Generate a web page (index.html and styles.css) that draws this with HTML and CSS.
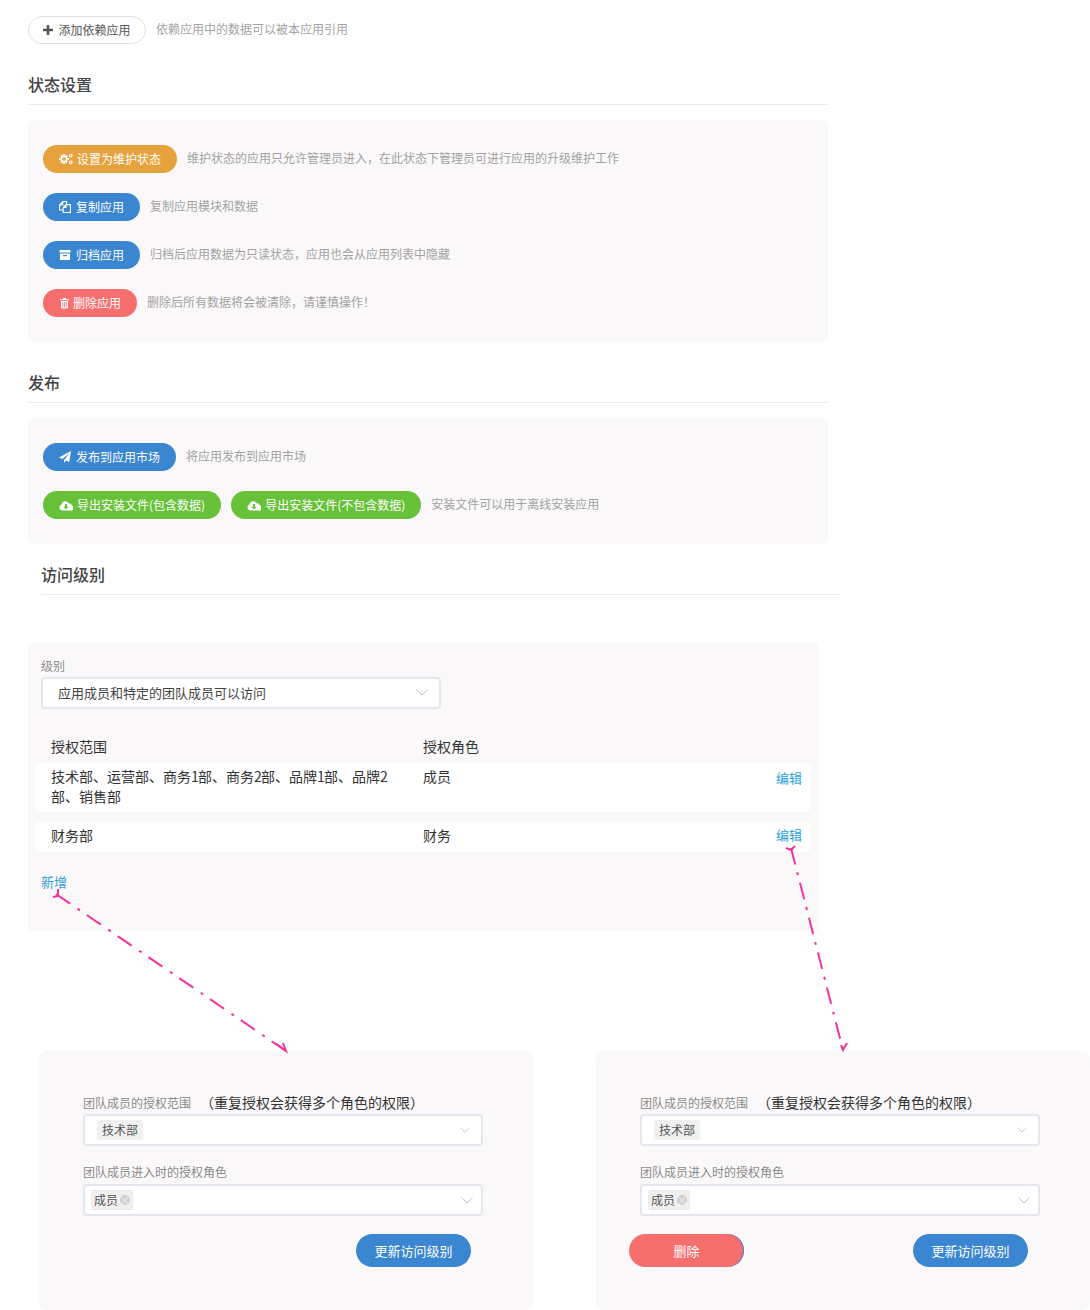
FILE: index.html
```html
<!DOCTYPE html>
<html lang="zh-CN">
<head>
    <meta charset="UTF-8">
    <meta name="viewport" content="width=device-width, initial-scale=1.0">
    <title>应用设置</title>
    <link rel="stylesheet" href="styles.css">
</head>
<body>
    <div class="page">
        <div class="dep-row">
            <button class="dep-btn">
                <svg class="icon-plus" viewBox="0 0 10 10"><path d="M3.700 0h2.600v3.700H10v2.600H6.300V10H3.700V6.300H0V3.700h3.700z"/></svg>
                添加依赖应用
            </button>
            <span class="hint">依赖应用中的数据可以被本应用引用</span>
        </div>

        <h2 class="section-title">状态设置</h2>
        <div class="panel panel-status">
            <div class="action-row">
                <button class="btn btn-orange">
                    <svg class="icon icon-wide" viewBox="0 0 14 12"><circle cx="5" cy="6" r="2.800" fill="none" stroke="#fff" stroke-width="1.900"/><path d="M4.100 1h1.800v1.500H4.100zM4.100 9.500h1.800V11H4.100zM0 5.100h1.500v1.800H0zM8.500 5.100H10v1.800H8.500zM1.300 3l1.200-1.200 1 1-1.200 1.200zM7.500 1.800 8.700 3l-1 1.200-1.200-1.200zM1.300 9l1.200 1.200 1-1-1.200-1.200zM8.700 9l-1.200 1.200-1-1 1.200-1.200z"/><circle cx="11.800" cy="2.600" r="1.300" fill="none" stroke="#fff" stroke-width="1.100"/><circle cx="11.800" cy="9.400" r="1.300" fill="none" stroke="#fff" stroke-width="1.100"/></svg>
                    设置为维护状态
                </button>
                <span class="hint">维护状态的应用只允许管理员进入，在此状态下管理员可进行应用的升级维护工作</span>
            </div>
            <div class="action-row">
                <button class="btn btn-blue">
                    <svg class="icon" viewBox="0 0 12 12"><path d="M7 3.600h4.400v7.900H4.200V6.400zM7 3.600v2.800H4.200M4.200 9H.6V4L3.700.6H7.600v3M3.700.6V4H.6" fill="none" stroke="#fff" stroke-width="1.100"/></svg>
                    复制应用
                </button>
                <span class="hint">复制应用模块和数据</span>
            </div>
            <div class="action-row">
                <button class="btn btn-blue">
                    <svg class="icon" viewBox="0 0 12 12"><path d="M.5 1h11v2.500H.5zM1 4.500h10V11H1zM4 6v1.200h4V6z" fill-rule="evenodd"/></svg>
                    归档应用
                </button>
                <span class="hint">归档后应用数据为只读状态，应用也会从应用列表中隐藏</span>
            </div>
            <div class="action-row">
                <button class="btn btn-red">
                    <svg class="icon icon-narrow" viewBox="0 0 11 12"><path d="M4.200 1h2.600l.5 1.200h2.700v1.100H1V2.200h2.700zM2 4h7v6.500a1 1 0 0 1-1 1H3a1 1 0 0 1-1-1zM3.500 5.200v5h.8v-5zM5.100 5.200v5h.8v-5zM6.700 5.200v5h.8v-5z" fill-rule="evenodd"/></svg>
                    删除应用
                </button>
                <span class="hint">删除后所有数据将会被清除，请谨慎操作！</span>
            </div>
        </div>

        <h2 class="section-title">发布</h2>
        <div class="panel panel-publish">
            <div class="action-row">
                <button class="btn btn-blue">
                    <svg class="icon" viewBox="0 0 12 12"><path d="M12 0 10.200 11 6.800 9.600 5 11.800V9.200L10.500 2 3.400 8 0 6.600z"/></svg>
                    发布到应用市场
                </button>
                <span class="hint">将应用发布到应用市场</span>
            </div>
            <div class="action-row">
                <button class="btn btn-green">
                    <svg class="icon icon-cloud" viewBox="0 0 14 11"><path d="M3.300 10.500A3 3 0 0 1 2.700 4.600 3.500 3.500 0 0 1 9.400 3.300 2.700 2.700 0 0 1 12.800 5.600 2.500 2.500 0 0 1 11.500 10.500zM6 4v2.700H4.200L7 9.400 9.800 6.700H8V4z" fill-rule="evenodd"/></svg>
                    导出安装文件(包含数据)
                </button>
                <button class="btn btn-green">
                    <svg class="icon icon-cloud" viewBox="0 0 14 11"><path d="M3.300 10.500A3 3 0 0 1 2.700 4.600 3.500 3.500 0 0 1 9.400 3.300 2.700 2.700 0 0 1 12.800 5.600 2.500 2.500 0 0 1 11.500 10.500zM6 4v2.700H4.200L7 9.400 9.800 6.700H8V4z" fill-rule="evenodd"/></svg>
                    导出安装文件(不包含数据)
                </button>
                <span class="hint">安装文件可以用于离线安装应用</span>
            </div>
        </div>

        <h2 class="section-title section-title-access">访问级别</h2>
        <div class="access-panel">
            <label class="field-label">级别</label>
            <div class="select select-level">
                <span>应用成员和特定的团队成员可以访问</span>
                <svg class="chevron" viewBox="0 0 12 7"><path d="M.5.5 6 6 11.500.5"/></svg>
            </div>

            <div class="grant-head">
                <span>授权范围</span>
                <span>授权角色</span>
            </div>
            <div class="grant-row">
                <span class="grant-scope">技术部、运营部、商务<span class="num">1</span>部、商务<span class="num">2</span>部、品牌<span class="num">1</span>部、品牌<span class="num">2</span>部、销售部</span>
                <span>成员</span>
                <a class="link link-low">编辑</a>
            </div>
            <div class="grant-row grant-row-single">
                <span class="grant-scope">财务部</span>
                <span>财务</span>
                <a class="link">编辑</a>
            </div>
            <a class="link link-add">新增</a>
        </div>

        <div class="form-cards">
            <div class="form-card">
                <div class="form-label-row">
                    <label class="field-label">团队成员的授权范围</label>
                    <span class="form-note">（重复授权会获得多个角色的权限）</span>
                </div>
                <div class="select">
                    <span class="tag">技术部</span>
                    <svg class="chevron chevron-small" viewBox="0 0 12 7"><path d="M.5.5 6 6 11.500.5"/></svg>
                </div>
                <label class="field-label field-label-role">团队成员进入时的授权角色</label>
                <div class="select select-role">
                    <span class="tag tag-close">成员<i class="tag-x"></i></span>
                    <svg class="chevron" viewBox="0 0 12 7"><path d="M.5.5 6 6 11.500.5"/></svg>
                </div>
                <div class="form-actions">
                    <span></span>
                    <button class="btn btn-blue btn-form">更新访问级别</button>
                </div>
            </div>

            <div class="form-card">
                <div class="form-label-row">
                    <label class="field-label">团队成员的授权范围</label>
                    <span class="form-note">（重复授权会获得多个角色的权限）</span>
                </div>
                <div class="select">
                    <span class="tag">技术部</span>
                    <svg class="chevron chevron-small" viewBox="0 0 12 7"><path d="M.5.5 6 6 11.500.5"/></svg>
                </div>
                <label class="field-label field-label-role">团队成员进入时的授权角色</label>
                <div class="select select-role">
                    <span class="tag tag-close">成员<i class="tag-x"></i></span>
                    <svg class="chevron" viewBox="0 0 12 7"><path d="M.5.5 6 6 11.500.5"/></svg>
                </div>
                <div class="form-actions">
                    <button class="btn btn-red btn-form btn-delete">删除</button>
                    <button class="btn btn-blue btn-form">更新访问级别</button>
                </div>
            </div>
        </div>

        <!-- annotation arrows drawn over the page -->
        <svg class="arrows" viewBox="0 0 1090 1310">
            <path class="dash" d="M56 894 286 1051"/>
            <path class="dash dash-steep" d="M791 848 843 1050"/>
            <path class="head" d="M53 897 58 896 58 889"/>
            <path class="head" d="M786 848 791 850 795 846"/>
            <path class="head" d="M275 1043 286 1051 283 1043"/>
            <path class="head" d="M841 1045 843 1050 847 1043"/>
        </svg>
    </div>
</body>
</html>
```

FILE: styles.css
```css
* {
    margin: 0;
    padding: 0;
    box-sizing: border-box;
}

body {
    font-family: "Noto Sans CJK SC", "Noto Sans", sans-serif;
    background: #fff;
    color: #333;
    width: 1090px;
    height: 1310px;
    overflow: hidden;
}

.page {
    position: relative;
    height: 1310px;
    padding-top: 16px;
}

button {
    font-family: inherit;
    border: none;
}

.dep-row {
    display: flex;
    align-items: center;
    gap: 10px;
    padding-left: 28px;
    height: 28px;
}

.dep-btn {
    display: flex;
    align-items: center;
    justify-content: center;
    width: 118px;
    height: 28px;
    padding-bottom: 2px;
    background: #fff;
    border: 1px solid #dcdfe6;
    border-radius: 14px;
    color: #555;
    font-size: 12px;
}

.icon-plus {
    width: 10px;
    height: 10px;
    margin-top: 2px;
    margin-right: 5px;
    fill: #555;
}

.hint {
    font-size: 12px;
    line-height: 26px;
    padding-bottom: 2px;
    color: #a3a3a3;
}

.section-title {
    width: 800px;
    margin-left: 28px;
    font-size: 16px;
    font-weight: 500;
    line-height: 22px;
    color: #444;
    border-bottom: 1px solid #ebebeb;
    padding-bottom: 9px;
}

.dep-row + .section-title {
    margin-top: 29px;
}

.panel {
    width: 800px;
    margin-left: 28px;
    margin-top: 15px;
    padding: 25px 15px 0;
    background: #faf8f9;
    border-radius: 6px;
}

.panel-status {
    height: 222px;
    margin-bottom: 29px;
}

.panel-publish {
    height: 126px;
    margin-bottom: 19px;
}

.action-row {
    display: flex;
    align-items: center;
    gap: 10px;
    height: 28px;
    margin-bottom: 20px;
}

.btn {
    display: flex;
    align-items: center;
    justify-content: center;
    height: 28px;
    padding: 0 16px 2px;
    border-radius: 14px;
    color: #fff;
    font-size: 12px;
    white-space: nowrap;
}

.btn-orange { background: #e6a23c; }
.btn-blue { background: #3a86d1; }
.btn-red { background: #f76e6e; }
.btn-green { background: #67c23a; }

.icon {
    width: 12px;
    height: 12px;
    margin-top: 2px;
    margin-right: 5px;
    fill: #fff;
    flex-shrink: 0;
}

.icon-wide { width: 14px; margin-right: 4px; }
.icon-narrow { width: 11px; margin-right: 3px; }
.icon-cloud { width: 14px; height: 11px; margin-right: 4px; }

.section-title-access {
    width: 799px;
    margin-left: 41px;
}

.access-panel {
    width: 790px;
    height: 288px;
    margin-top: 48px;
    margin-left: 28px;
    padding: 14px 7px 0 6px;
    background: #faf8f9;
}

.field-label {
    display: block;
    font-size: 12px;
    line-height: 18px;
    color: #8a8a8a;
}

.access-panel > .field-label {
    margin-left: 7px;
}

.select {
    display: flex;
    align-items: center;
    justify-content: space-between;
    width: 400px;
    height: 32px;
    padding-right: 11px;
    padding-left: 15px;
    background: #fff;
    border: 2px solid #e4e7ed;
    border-radius: 4px;
}

.select-level {
    margin-left: 7px;
    margin-top: 2px;
    padding-bottom: 2px;
    font-size: 13px;
    color: #444;
}

.chevron {
    width: 12px;
    height: 7px;
    fill: none;
    stroke: #c0c4cc;
    stroke-width: 1;
}

.chevron-small {
    width: 10px;
    height: 6px;
}

.grant-head,
.grant-row {
    display: grid;
    grid-template-columns: 372px 1fr auto;
    padding-left: 17px;
    padding-right: 9px;
    font-size: 14px;
    line-height: 20px;
    color: #333;
}

.grant-head {
    grid-template-columns: 372px 1fr;
    margin-top: 28px;
    height: 26px;
    line-height: 18px;
}

.grant-row {
    min-height: 30px;
    padding-top: 3px;
    padding-bottom: 6px;
    margin-bottom: 10px;
    background: #fff;
    border-radius: 6px;
}

.grant-scope {
    padding-right: 32px;
}

.grant-scope .num {
    letter-spacing: -0.75px;
}

.grant-row-single {
    padding-bottom: 7px;
    margin-bottom: 0;
}

.link {
    font-size: 13px;
    line-height: 20px;
    color: #2d9fd8;
}

.link-low {
    margin-top: 2px;
}

.link-add {
    display: block;
    margin-top: 20px;
    margin-left: 7px;
}

.form-cards {
    display: flex;
    gap: 63px;
    margin-top: 120px;
    margin-left: 39px;
}

.form-card {
    width: 494px;
    height: 259px;
    padding: 42px 50px 0 44px;
    background: #faf8f9;
    border-radius: 8px;
}

.form-label-row {
    display: flex;
    align-items: flex-start;
    height: 21px;
}

.form-label-row .field-label {
    margin-top: 1px;
}

.form-note {
    margin-left: 9px;
    font-size: 14px;
    line-height: 18px;
    color: #333;
}

.form-card .select {
    padding-left: 12px;
}

.form-card .select-role {
    padding-left: 6px;
    padding-right: 8px;
}

.field-label-role {
    margin-top: 17px;
    margin-bottom: 3px;
}

.tag {
    display: inline-flex;
    align-items: center;
    height: 20px;
    padding: 0 5px 2px;
    font-size: 12px;
    color: #555;
    background: #f0f0f0;
    border-radius: 3px;
}

.tag-close {
    padding: 0 2px 2px;
    border: 1px solid #ebebeb;
}

.tag-x {
    position: relative;
    width: 10px;
    height: 10px;
    margin-top: 2px;
    margin-left: 2px;
    background: #d0d0d0;
    border-radius: 50%;
}

.tag-x::before {
    content: "×";
    position: absolute;
    inset: 0;
    font-size: 10px;
    font-style: normal;
    line-height: 10px;
    text-align: center;
    color: #f0f0f0;
}

.form-actions {
    display: flex;
    justify-content: space-between;
    margin-top: 18px;
    margin-left: -11px;
    margin-right: 12px;
}

.btn-form {
    width: 115px;
    height: 33px;
    padding: 0;
    border-radius: 17px;
    font-size: 13px;
}

.btn-delete {
    box-shadow: inset -1px 0 0 #3a86d1;
}

.arrows {
    position: absolute;
    left: 0;
    top: 0;
    width: 1090px;
    height: 1310px;
    fill: none;
    stroke: #f5339c;
    stroke-width: 2;
    pointer-events: none;
}

.arrows .dash {
    stroke-dasharray: 17 9 3 8.300;
}

.arrows .dash-steep {
    stroke-dasharray: 17 8 3 8;
}
```
